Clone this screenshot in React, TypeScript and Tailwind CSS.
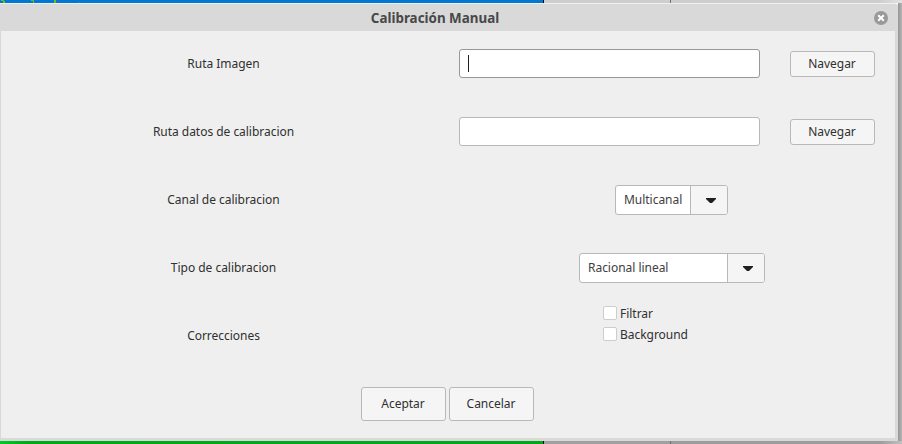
import type { ReactNode } from "react";

function Row({ label, children }: { label: string; children: ReactNode }) {
  return (
    <div className="flex h-[65px] items-center">
      <div className="w-[445px] shrink-0 text-center">{label}</div>
      {children}
    </div>
  );
}

function PathField({ focused = false }: { focused?: boolean }) {
  return (
    <>
      <div
        className={`ml-[13px] flex h-[29px] w-[301px] items-center rounded-[3px] border bg-white pl-2 ${
          focused ? "border-[#989898]" : "border-[#b8b8b8]"
        }`}
      >
        {focused && <span className="h-[17px] w-px bg-[#202020]" />}
      </div>
      <button className="mt-px ml-[30px] h-[26px] w-[85px] rounded-[3px] border border-[#b8b8b8] bg-[#f5f5f5] pr-px pb-px">
        Navegar
      </button>
    </>
  );
}

function Combo({ value, className }: { value: string; className: string }) {
  return (
    <div
      className={`mt-px flex h-[30px] overflow-hidden rounded-[3px] border border-[#b8b8b8] bg-white text-[#404040] ${className}`}
    >
      <div className="flex flex-1 items-center pb-px pl-2 whitespace-nowrap">{value}</div>
      <div className="flex w-[37px] items-center border-l border-[#b8b8b8] bg-[#f5f5f5] pl-[15px]">
        <svg width="10" height="5" viewBox="0 0 10 5" className="mt-px">
          <path d="M0 0h10v1L6 5H4L0 1z" fill="#202020" />
        </svg>
      </div>
    </div>
  );
}

function Check({ label }: { label: string }) {
  return (
    <label className="flex h-[21px] items-center gap-[3px]">
      <span className="h-[14px] w-[14px] rounded-[2px] border border-[#cdcdcd] bg-white" />
      <span>{label}</span>
    </label>
  );
}

function Backdrop({ edge }: { edge: "top" | "bottom" }) {
  const top = edge === "top";
  return (
    <div className="flex h-[3px] overflow-hidden">
      <div
        className={`w-[543px] ${
          top ? "bg-[#0078d2]" : "bg-linear-to-r from-[#00cc22] via-[#00aa14] via-5% to-[#00a816]"
        }`}
      >
        {top && (
          <svg width="90" height="3" className="block">
            <path d="M1 0h3v1h1v2H3V1H1zM31 0h3v3h-1V1h-2zM54 0h2v3h-2z" fill="#78b820" />
            <path d="M78 2h2v1h-2z" fill="#2880a0" />
          </svg>
        )}
      </div>
      <div className="w-px bg-black" />
      <div className={`w-[126px] ${top ? "bg-[#cecece]" : "bg-[#a0a0a0]"}`} />
      <div className="w-px bg-[#707070]" />
      <div
        className={`flex-1 ${
          top
            ? "bg-linear-to-r from-[#cecece] from-90% to-[#e2e2e2]"
            : "bg-linear-to-r from-[#9c9c9c] from-90% to-[#c0c0c0]"
        }`}
      />
    </div>
  );
}

export default function App() {
  return (
    <div className="h-[444px] w-[902px] overflow-hidden font-['Noto_Sans',sans-serif] text-[12px] leading-[17px] tracking-[-0.03px] text-[#303030]">
      <Backdrop edge="top" />
      <div className="flex h-[438px]">
        <div className="w-[898px] rounded-tr-[3px] border-t border-[#f0f0f0] bg-[#d9d9d9]">
          <header className="flex h-[27px] items-center">
            <h1 className="flex-1 pt-px pr-1 text-center text-[13.4px] font-bold tracking-normal text-[#484848]">
              Calibración Manual
            </h1>
            <svg width="14" height="14" viewBox="0 0 14 14" className="mr-[10px]">
              <circle cx="7" cy="7" r="7" fill="#999" />
              <path d="M4.2 4.2l5.6 5.6M9.8 4.2l-5.6 5.6" stroke="#fff" strokeWidth="2" />
            </svg>
          </header>
          <main className="ml-px h-[407px] w-[894px] bg-[#efefef]">
            <div className="flex flex-col gap-[3px]">
              <Row label="Ruta Imagen">
                <PathField focused />
              </Row>
              <Row label="Ruta datos de calibracion">
                <PathField />
              </Row>
              <Row label="Canal de calibracion">
                <Combo value="Multicanal" className="ml-[169px] w-[113px]" />
              </Row>
              <Row label="Tipo de calibracion">
                <Combo value="Racional lineal" className="ml-[133px] w-[186px]" />
              </Row>
              <Row label="Correcciones">
                <div className="mb-6 ml-[157px]">
                  <Check label="Filtrar" />
                  <Check label="Background" />
                </div>
              </Row>
            </div>
            <div className="mt-[19px] flex gap-[3px] pl-[360px]">
              {["Aceptar", "Cancelar"].map((name) => (
                <button
                  key={name}
                  className="h-[34px] w-[85px] rounded-[3px] border border-[#b8b8b8] bg-[#f5f5f5] pr-px pb-px"
                >
                  {name}
                </button>
              ))}
            </div>
          </main>
        </div>
        <div className="flex-1 bg-linear-to-r from-[#969696] to-[#b4b4b4]" />
      </div>
      <Backdrop edge="bottom" />
    </div>
  );
}
